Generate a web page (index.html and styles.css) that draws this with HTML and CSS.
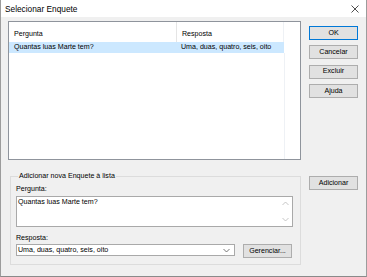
FILE: index.html
```html
<!DOCTYPE html>
<html lang="pt">
<head>
<meta charset="utf-8">
<title>Selecionar Enquete</title>
<link rel="stylesheet" href="styles.css">
</head>
<body>
<div class="window">
  <div class="titlebar">
    <span class="title">Selecionar Enquete</span>
    <svg class="close" width="8" height="8" viewBox="0 0 8 8"><path d="M0.5 0.5 L7.5 7.5 M7.5 0.5 L0.5 7.5" stroke="#222" stroke-width="0.8" fill="none"/></svg>
  </div>
  <div class="content">
    <div class="toprow">
      <div class="list">
        <div class="header">
          <div class="hcol c1">Pergunta</div>
          <div class="hcol c2">Resposta</div>
          <div class="hfill"></div>
        </div>
        <div class="rows">
          <div class="row selected">
            <div class="cell c1">Quantas luas Marte tem?</div>
            <div class="cell c2">Uma, duas, quatro, seis, oito</div>
          </div>
          <div class="rest">
            <div class="restcols"></div>
            <div class="hfill"></div>
          </div>
        </div>
      </div>
      <div class="buttons">
        <div class="btn default">OK</div>
        <div class="btn">Cancelar</div>
        <div class="btn">Excluir</div>
        <div class="btn">Ajuda</div>
      </div>
    </div>
    <div class="bottomrow">
      <fieldset class="group">
        <legend>Adicionar nova Enquete à lista</legend>
        <div class="label">Pergunta:</div>
        <div class="memo">
          <div class="memotext">Quantas luas Marte tem?</div>
          <div class="vscroll">
            <svg width="7" height="5" viewBox="0 0 7 5"><path d="M0.5 4 L3.5 1 L6.5 4" stroke="#b8b8b8" stroke-width="0.8" fill="none"/></svg>
            <svg width="7" height="5" viewBox="0 0 7 5"><path d="M0.5 1 L3.5 4 L6.5 1" stroke="#b8b8b8" stroke-width="0.8" fill="none"/></svg>
          </div>
        </div>
        <div class="label label2">Resposta:</div>
        <div class="comborow">
          <div class="combo">
            <span>Uma, duas, quatro, seis, oito</span>
            <svg width="7" height="5" viewBox="0 0 7 5"><path d="M0.5 1 L3.5 4 L6.5 1" stroke="#555" stroke-width="0.8" fill="none"/></svg>
          </div>
          <div class="btn gerenciar">Gerenciar...</div>
        </div>
      </fieldset>
      <div class="sidecol">
        <div class="btn">Adicionar</div>
      </div>
    </div>
  </div>
</div>
</body>
</html>
```

FILE: styles.css
```css
html, body {
  margin: 0;
  padding: 0;
  background: #f0f0f0;
}
body {
  font-family: "Liberation Sans", Arial, sans-serif;
  font-size: 7.1px;
  color: #000;
}
.window {
  width: 367px;
  height: 277px;
  box-sizing: border-box;
  background: #f0f0f0;
  border-left: 1px solid #9c9c9c;
  border-right: 1px solid #9c9c9c;
  border-bottom: 1px solid #8a8a8a;
  display: flex;
  flex-direction: column;
}
.titlebar {
  height: 17px;
  background: #ffffff;
  display: flex;
  align-items: center;
  justify-content: space-between;
  padding: 0 7px 0 4px;
  flex-shrink: 0;
}
.title {
  font-size: 8.3px;
  line-height: 10px;
  padding-top: 1px;
}
.close {
  display: block;
  margin-top: 1px;
}
.content {
  padding: 4px 0 0 7px;
  display: flex;
  flex-direction: column;
}
.toprow {
  display: flex;
  align-items: flex-start;
}
.list {
  width: 293px;
  height: 139px;
  box-sizing: border-box;
  border: 1px solid #8f949c;
  background: #fff;
  display: flex;
  flex-direction: column;
}
.header {
  height: 20px;
  display: flex;
  flex-shrink: 0;
}
.hcol {
  box-sizing: border-box;
  padding: 8px 0 0 5px;
  line-height: 9px;
}
.c1 { width: 168px; box-sizing: border-box; }
.c2 { width: 107px; box-sizing: border-box; }
.hcol.c1 { border-right: 1px solid #e5e5e5; }
.hcol.c2 { border-right: 1px solid #eef1f5; }
.hfill { flex: 1; }
.rows {
  flex: 1;
  display: flex;
  flex-direction: column;
}
.row {
  display: flex;
  height: 11px;
  width: 275px;
}
.row.selected { background: #cce8ff; }
.cell {
  padding-left: 5px;
  line-height: 11px;
  white-space: nowrap;
}
.cell.c2 { padding-left: 4px; }
.rest {
  flex: 1;
  display: flex;
}
.restcols {
  width: 275px;
  border-right: 1px solid #eef1f5;
}
.buttons {
  margin-left: 8px;
  margin-top: 5px;
  display: flex;
  flex-direction: column;
  gap: 5.4px;
}
.btn {
  width: 49px;
  height: 14px;
  box-sizing: border-box;
  background: #e1e1e1;
  border: 1px solid #adadad;
  display: flex;
  align-items: center;
  justify-content: center;
  line-height: 9px;
}
.btn.default {
  border-color: #0078d7;
}
.bottomrow {
  display: flex;
  align-items: flex-start;
  margin-top: 12px;
}
.group {
  margin: 0 0 0 2px;
  width: 291px;
  height: 93px;
  box-sizing: border-box;
  border: 1px solid #dcdcdc;
  padding: 5px 7px 0 5px;
  min-inline-size: 0;
}
.group legend {
  padding: 0 1px;
  margin-left: 2px;
  line-height: 8px;
}
.label {
  line-height: 9px;
  padding-left: 0;
}
.memo {
  margin-top: 2px;
  height: 31px;
  box-sizing: border-box;
  border: 1px solid #a9a9a9;
  background: #fff;
  display: flex;
}
.memotext {
  flex: 1;
  padding: 1px 0 0 1px;
  line-height: 9px;
}
.vscroll {
  width: 13px;
  display: flex;
  flex-direction: column;
  justify-content: space-between;
  align-items: center;
  padding: 4px 0 4px;
}
.vscroll svg { display: block; }
.label2 {
  margin-top: 7px;
}
.comborow {
  margin-top: 1px;
  display: flex;
  align-items: flex-start;
  gap: 8px;
}
.combo {
  width: 219px;
  height: 12px;
  box-sizing: border-box;
  border: 1px solid #a9a9a9;
  background: #fff;
  display: flex;
  align-items: center;
  justify-content: space-between;
  padding: 0 4px 0 1px;
  line-height: 9px;
}
.combo svg { display: block; }
.gerenciar {
  width: 49px;
}
.sidecol {
  margin-left: 8px;
  margin-top: 4px;
}
```
